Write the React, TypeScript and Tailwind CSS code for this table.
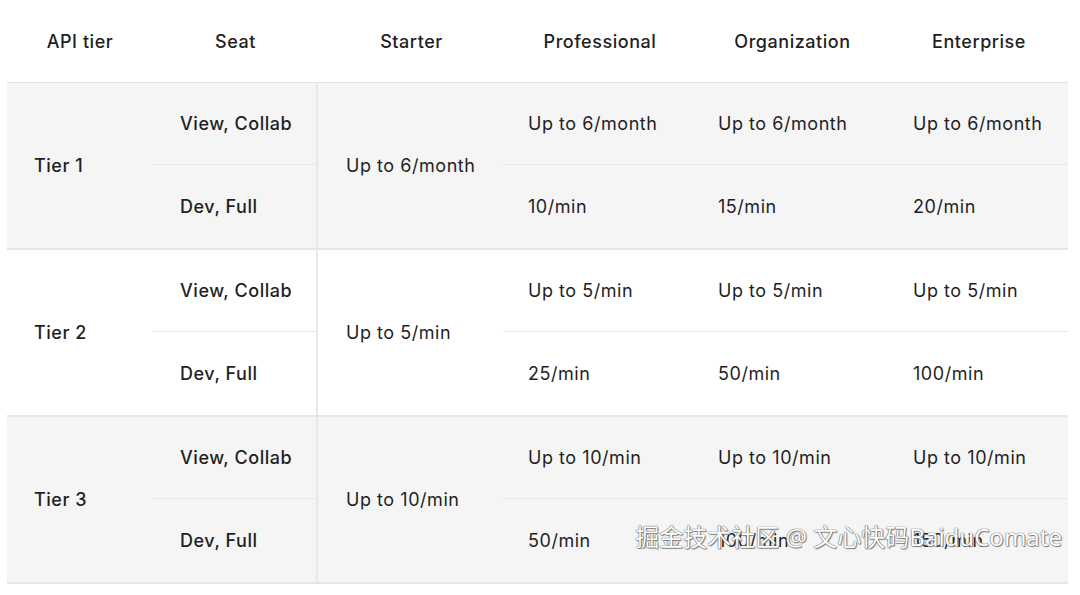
import React from 'react';

const font = { fontFamily: 'Inter, "Noto Sans", sans-serif' };

interface Tier {
  name: string;
  starter: string;
  top: [string, string, string];
  bottom: [string, string, string];
  shaded: boolean;
}

const tiers: Tier[] = [
  { name: 'Tier 1', starter: 'Up to 6/month', top: ['Up to 6/month', 'Up to 6/month', 'Up to 6/month'], bottom: ['10/min', '15/min', '20/min'], shaded: true },
  { name: 'Tier 2', starter: 'Up to 5/min', top: ['Up to 5/min', 'Up to 5/min', 'Up to 5/min'], bottom: ['25/min', '50/min', '100/min'], shaded: false },
  { name: 'Tier 3', starter: 'Up to 10/min', top: ['Up to 10/min', 'Up to 10/min', 'Up to 10/min'], bottom: ['50/min', '100/min', '150/min'], shaded: true },
];

function TierBlock({ tier }: { tier: Tier }) {
  return (
    <div className={`flex h-[167px] border-b-2 border-[#e6e6e8] ${tier.shaded ? 'bg-[#f5f5f6]' : 'bg-white'}`}>
      {/* API tier */}
      <div className="w-[146px] flex items-center pl-[27px] font-medium">{tier.name}</div>

      {/* Seat */}
      <div className="w-[165px] flex flex-col border-r-2 border-[#e8e8ea]">
        <div className="h-[82px] flex items-center pl-[27px] font-medium border-b border-[#e6e6e8]">View, Collab</div>
        <div className="flex-1 flex items-center pl-[27px] font-medium">Dev, Full</div>
      </div>

      {/* Starter */}
      <div className="w-[185px] flex items-center pl-[28px]">{tier.starter}</div>

      {/* Paid plans */}
      <div className="flex-1 flex flex-col">
        <div className="h-[82px] flex items-center border-b border-[#e6e6e8]">
          <div className="w-[190px] pl-[25px]">{tier.top[0]}</div>
          <div className="w-[195px] pl-[25px]">{tier.top[1]}</div>
          <div className="flex-1 pl-[25px]">{tier.top[2]}</div>
        </div>
        <div className="flex-1 flex items-center">
          <div className="w-[190px] pl-[25px]">{tier.bottom[0]}</div>
          <div className="w-[195px] pl-[25px]">{tier.bottom[1]}</div>
          <div className="flex-1 pl-[25px]">{tier.bottom[2]}</div>
        </div>
      </div>
    </div>
  );
}

export default function App() {
  return (
    <div className="relative w-[1080px] h-[595px] bg-white text-[#1f1f1f] text-[18px] tracking-[0.03em] overflow-hidden" style={font}>
      <div className="ml-[7px] w-[1061px]">
        {/* Header */}
        <div className="flex h-[83px] items-center border-b border-[#e2e2e4] font-medium">
          <div className="w-[146px] text-center">API tier</div>
          <div className="w-[165px] text-center">Seat</div>
          <div className="w-[187px] text-center">Starter</div>
          <div className="w-[190px] text-center">Professional</div>
          <div className="w-[195px] text-center">Organization</div>
          <div className="flex-1 text-center">Enterprise</div>
        </div>

        {tiers.map((t) => (
          <TierBlock key={t.name} tier={t} />
        ))}
      </div>

      {/* Watermark */}
      <div
        className="absolute right-[18px] bottom-[46px] text-[24px] leading-none tracking-normal text-white [text-shadow:0_0_1px_#555,0_0_1px_#555,1px_1px_1px_#888]"
        style={{ fontFamily: '"Noto Sans", "Noto Sans CJK SC", sans-serif' }}
      >
        掘金技术社区 @ 文心快码BaiduComate
      </div>
    </div>
  );
}
